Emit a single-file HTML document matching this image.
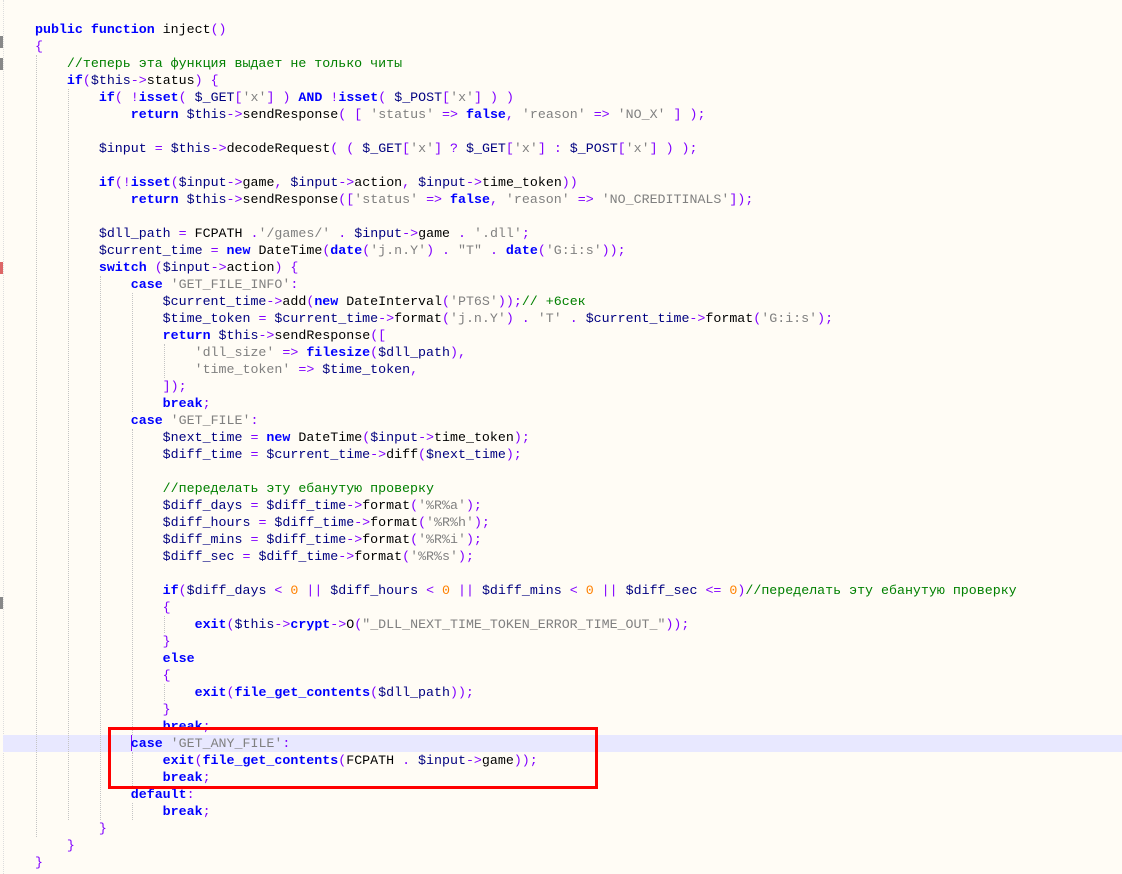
<!DOCTYPE html>
<html><head><meta charset="utf-8"><style>
html,body{margin:0;padding:0;}
body{width:1122px;height:874px;background:#fffcf5;position:relative;overflow:hidden;font-family:"Liberation Mono",monospace;font-size:13.3px;}
pre{margin:0;position:absolute;left:35px;top:20.5px;font:inherit;line-height:17px;color:#000;white-space:pre;}
.k{color:#0000ff;font-weight:bold}
.v{color:#000080}
.s{color:#808080}
.o{color:#8000ff}
.c{color:#008000}
.n{color:#ff8000}
.g{position:absolute;width:0;border-left:1px dotted #c4c4c4;}
.hl{position:absolute;left:3px;right:0;top:734.5px;height:17px;background:#e8e8ff;}
.m{position:absolute;left:0;width:3px;height:12px;background:#888;}
</style></head><body>
<div class="g" style="left:3px;top:0;height:874px;border-left-color:#ddd"></div>
<div class="m" style="top:36px"></div>
<div class="m" style="top:58px"></div>
<div class="m" style="top:262px;background:#d66"></div>
<div class="m" style="top:597px"></div>
<div class="hl"></div>
<div class="g" style="left:36px;top:54.5px;height:782px"></div>
<div class="g" style="left:68px;top:88.5px;height:731px"></div>
<div class="g" style="left:100px;top:275.5px;height:544px"></div>
<div class="g" style="left:132px;top:292.5px;height:119px"></div>
<div class="g" style="left:132px;top:428.5px;height:306px"></div>
<div class="g" style="left:132px;top:751.5px;height:34px"></div>
<div class="g" style="left:132px;top:802.5px;height:17px"></div>
<div class="g" style="left:164px;top:343.5px;height:34px"></div>
<div class="g" style="left:164px;top:615.5px;height:17px"></div>
<div class="g" style="left:164px;top:683.5px;height:17px"></div>
<div style="position:absolute;left:131px;top:735px;width:1px;height:16px;background:#8000ff"></div>
<pre><span class="k">public function</span> inject<span class="o">()</span>
<span class="o">{</span>
    <span class="c">//теперь эта функция выдает не только читы</span>
    <span class="k">if</span><span class="o">(</span><span class="v">$this</span><span class="o">-&gt;</span>status<span class="o">) {</span>
        <span class="k">if</span><span class="o">( !</span><span class="k">isset</span><span class="o">(</span> <span class="v">$_GET</span><span class="o">[</span><span class="s">'x'</span><span class="o">] )</span> <span class="k">AND</span> <span class="o">!</span><span class="k">isset</span><span class="o">(</span> <span class="v">$_POST</span><span class="o">[</span><span class="s">'x'</span><span class="o">] ) )</span>
            <span class="k">return</span> <span class="v">$this</span><span class="o">-&gt;</span>sendResponse<span class="o">( [</span> <span class="s">'status'</span> <span class="o">=&gt;</span> <span class="k">false</span><span class="o">,</span> <span class="s">'reason'</span> <span class="o">=&gt;</span> <span class="s">'NO_X'</span> <span class="o">] );</span>

        <span class="v">$input</span> <span class="o">=</span> <span class="v">$this</span><span class="o">-&gt;</span>decodeRequest<span class="o">( (</span> <span class="v">$_GET</span><span class="o">[</span><span class="s">'x'</span><span class="o">] ?</span> <span class="v">$_GET</span><span class="o">[</span><span class="s">'x'</span><span class="o">] :</span> <span class="v">$_POST</span><span class="o">[</span><span class="s">'x'</span><span class="o">] ) );</span>

        <span class="k">if</span><span class="o">(!</span><span class="k">isset</span><span class="o">(</span><span class="v">$input</span><span class="o">-&gt;</span>game<span class="o">,</span> <span class="v">$input</span><span class="o">-&gt;</span>action<span class="o">,</span> <span class="v">$input</span><span class="o">-&gt;</span>time_token<span class="o">))</span>
            <span class="k">return</span> <span class="v">$this</span><span class="o">-&gt;</span>sendResponse<span class="o">([</span><span class="s">'status'</span> <span class="o">=&gt;</span> <span class="k">false</span><span class="o">,</span> <span class="s">'reason'</span> <span class="o">=&gt;</span> <span class="s">'NO_CREDITINALS'</span><span class="o">]);</span>

        <span class="v">$dll_path</span> <span class="o">=</span> FCPATH <span class="o">.</span><span class="s">'/games/'</span> <span class="o">.</span> <span class="v">$input</span><span class="o">-&gt;</span>game <span class="o">.</span> <span class="s">'.dll'</span><span class="o">;</span>
        <span class="v">$current_time</span> <span class="o">=</span> <span class="k">new</span> DateTime<span class="o">(</span><span class="k">date</span><span class="o">(</span><span class="s">'j.n.Y'</span><span class="o">) .</span> <span class="s">"T"</span> <span class="o">.</span> <span class="k">date</span><span class="o">(</span><span class="s">'G:i:s'</span><span class="o">));</span>
        <span class="k">switch</span> <span class="o">(</span><span class="v">$input</span><span class="o">-&gt;</span>action<span class="o">) {</span>
            <span class="k">case</span> <span class="s">'GET_FILE_INFO'</span><span class="o">:</span>
                <span class="v">$current_time</span><span class="o">-&gt;</span>add<span class="o">(</span><span class="k">new</span> DateInterval<span class="o">(</span><span class="s">'PT6S'</span><span class="o">));</span><span class="c">// +6сек</span>
                <span class="v">$time_token</span> <span class="o">=</span> <span class="v">$current_time</span><span class="o">-&gt;</span>format<span class="o">(</span><span class="s">'j.n.Y'</span><span class="o">) .</span> <span class="s">'T'</span> <span class="o">.</span> <span class="v">$current_time</span><span class="o">-&gt;</span>format<span class="o">(</span><span class="s">'G:i:s'</span><span class="o">);</span>
                <span class="k">return</span> <span class="v">$this</span><span class="o">-&gt;</span>sendResponse<span class="o">([</span>
                    <span class="s">'dll_size'</span> <span class="o">=&gt;</span> <span class="k">filesize</span><span class="o">(</span><span class="v">$dll_path</span><span class="o">),</span>
                    <span class="s">'time_token'</span> <span class="o">=&gt;</span> <span class="v">$time_token</span><span class="o">,</span>
                <span class="o">]);</span>
                <span class="k">break</span><span class="o">;</span>
            <span class="k">case</span> <span class="s">'GET_FILE'</span><span class="o">:</span>
                <span class="v">$next_time</span> <span class="o">=</span> <span class="k">new</span> DateTime<span class="o">(</span><span class="v">$input</span><span class="o">-&gt;</span>time_token<span class="o">);</span>
                <span class="v">$diff_time</span> <span class="o">=</span> <span class="v">$current_time</span><span class="o">-&gt;</span>diff<span class="o">(</span><span class="v">$next_time</span><span class="o">);</span>

                <span class="c">//переделать эту ебанутую проверку</span>
                <span class="v">$diff_days</span> <span class="o">=</span> <span class="v">$diff_time</span><span class="o">-&gt;</span>format<span class="o">(</span><span class="s">'%R%a'</span><span class="o">);</span>
                <span class="v">$diff_hours</span> <span class="o">=</span> <span class="v">$diff_time</span><span class="o">-&gt;</span>format<span class="o">(</span><span class="s">'%R%h'</span><span class="o">);</span>
                <span class="v">$diff_mins</span> <span class="o">=</span> <span class="v">$diff_time</span><span class="o">-&gt;</span>format<span class="o">(</span><span class="s">'%R%i'</span><span class="o">);</span>
                <span class="v">$diff_sec</span> <span class="o">=</span> <span class="v">$diff_time</span><span class="o">-&gt;</span>format<span class="o">(</span><span class="s">'%R%s'</span><span class="o">);</span>

                <span class="k">if</span><span class="o">(</span><span class="v">$diff_days</span> <span class="o">&lt;</span> <span class="n">0</span> <span class="o">||</span> <span class="v">$diff_hours</span> <span class="o">&lt;</span> <span class="n">0</span> <span class="o">||</span> <span class="v">$diff_mins</span> <span class="o">&lt;</span> <span class="n">0</span> <span class="o">||</span> <span class="v">$diff_sec</span> <span class="o">&lt;=</span> <span class="n">0</span><span class="o">)</span><span class="c">//переделать эту ебанутую проверку</span>
                <span class="o">{</span>
                    <span class="k">exit</span><span class="o">(</span><span class="v">$this</span><span class="o">-&gt;</span><span class="k">crypt</span><span class="o">-&gt;</span>O<span class="o">(</span><span class="s">"_DLL_NEXT_TIME_TOKEN_ERROR_TIME_OUT_"</span><span class="o">));</span>
                <span class="o">}</span>
                <span class="k">else</span>
                <span class="o">{</span>
                    <span class="k">exit</span><span class="o">(</span><span class="k">file_get_contents</span><span class="o">(</span><span class="v">$dll_path</span><span class="o">));</span>
                <span class="o">}</span>
                <span class="k">break</span><span class="o">;</span>
            <span class="k">case</span> <span class="s">'GET_ANY_FILE'</span><span class="o">:</span>
                <span class="k">exit</span><span class="o">(</span><span class="k">file_get_contents</span><span class="o">(</span>FCPATH <span class="o">.</span> <span class="v">$input</span><span class="o">-&gt;</span>game<span class="o">));</span>
                <span class="k">break</span><span class="o">;</span>
            <span class="k">default</span><span class="o">:</span>
                <span class="k">break</span><span class="o">;</span>
        <span class="o">}</span>
    <span class="o">}</span>
<span class="o">}</span></pre>
<div style="position:absolute;left:108px;top:727px;width:484px;height:56px;border:3px solid #ff0000;"></div>
</body></html>
